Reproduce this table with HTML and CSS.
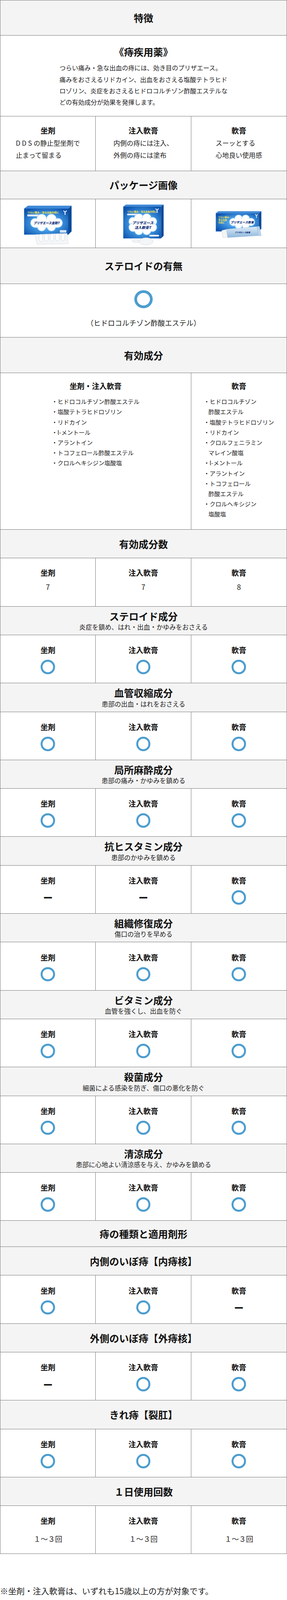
FILE: index.html
```html
<!DOCTYPE html>
<html lang="ja">
<head>
<meta charset="utf-8">
<title>プリザエース 比較表</title>
<link rel="stylesheet" href="styles.css">
</head>
<body>
<div class="tbl">
  <div class="hd hd-first"><h2 class="ttl">特徴</h2></div>

  <div class="row desc">
    <p class="desc-ttl">《痔疾用薬》</p>
    <p class="desc-txt">つらい痛み・急な出血の痔には、効き目のプリザエース。<br>痛みをおさえるリドカイン、出血をおさえる塩酸テトラヒド<br>ロゾリン、炎症をおさえるヒドロコルチゾン酢酸エステルな<br>どの有効成分が効果を発揮します。</p>
  </div>

  <div class="row cols3 feat">
    <div class="cell"><p class="lbl">坐剤</p><p class="ftxt"><span class="wide">DDS</span>の静止型坐剤で<br>止まって留まる</p></div>
    <div class="cell"><p class="lbl">注入軟膏</p><p class="ftxt">内側の痔には注入、<br>外側の痔には塗布</p></div>
    <div class="cell"><p class="lbl">軟膏</p><p class="ftxt">スーッとする<br>心地良い使用感</p></div>
  </div>

  <div class="hd hd-pkg"><h2 class="ttl">パッケージ画像</h2></div>

  <div class="row cols3 pkg">
    <div class="cell">
      <svg class="pk1" viewBox="0 0 150 124" aria-label="プリザエース坐剤T">
        <defs>
          <radialGradient id="ga" cx="50%" cy="55%" r="65%">
            <stop offset="0" stop-color="#d6efff"/>
            <stop offset="0.4" stop-color="#4aa3ea"/>
            <stop offset="1" stop-color="#0c52ad"/>
          </radialGradient>
        </defs>
        <polygon points="2,12 14,3 148,3 138,12" fill="#3c88d8"/>
        <rect x="2" y="12" width="136" height="80" fill="url(#ga)"/>
        <polygon points="138,12 148,3 148,82 138,92" fill="#0b4a98"/>
        <text x="12" y="26" font-size="7.5" font-weight="700" fill="#ffe94a">つらい痛み・急な出血の痔に</text>
        <rect x="12" y="30" width="40" height="6" fill="#ffffff" opacity="0.85"/>
        <g fill="#ffffff" stroke="#9fd0f4" stroke-width="1.5">
          <circle cx="36" cy="56" r="14"/><circle cx="56" cy="44" r="15"/><circle cx="86" cy="44" r="15"/>
          <circle cx="106" cy="56" r="14"/><circle cx="56" cy="68" r="13"/><circle cx="86" cy="68" r="13"/>
        </g>
        <rect x="36" y="44" width="70" height="26" fill="#ffffff"/>
        <text x="71" y="60" text-anchor="middle" font-size="10" font-weight="900" font-style="italic" fill="#0c2e78" textLength="80" lengthAdjust="spacingAndGlyphs">プリザエース坐剤T</text>
        <path d="M122,18 L128,26 L134,18 L131,18 L128,22 L125,18Z" fill="#ffffff"/>
        <rect x="126.5" y="26" width="3" height="5" fill="#ffffff"/>
        <rect x="112" y="78" width="20" height="8" fill="#ffffff" opacity="0.8"/>
        <polygon points="36,92 134,88 138,120 42,122" fill="#f4f6f8" stroke="#d6dbe0"/>
        <g fill="#ffffff" stroke="#c9d0d8">
          <rect x="48" y="91" width="11" height="22" rx="5.5"/><rect x="65" y="90" width="11" height="22" rx="5.5"/>
          <rect x="82" y="90" width="11" height="22" rx="5.5"/><rect x="99" y="89" width="11" height="22" rx="5.5"/>
          <rect x="116" y="89" width="11" height="22" rx="5.5"/>
        </g>
      </svg>
    </div>
    <div class="cell">
      <svg class="pk2" viewBox="0 0 128 128" aria-label="プリザエース注入軟膏T">
        <defs>
          <radialGradient id="gb" cx="50%" cy="55%" r="65%">
            <stop offset="0" stop-color="#d6efff"/>
            <stop offset="0.4" stop-color="#4aa3ea"/>
            <stop offset="1" stop-color="#0c52ad"/>
          </radialGradient>
        </defs>
        <polygon points="2,8 10,2 126,2 118,8" fill="#3c88d8"/>
        <rect x="2" y="8" width="116" height="98" fill="url(#gb)"/>
        <polygon points="118,8 126,2 126,98 118,106" fill="#0b4a98"/>
        <text x="14" y="26" font-size="7" font-weight="700" fill="#ffe94a">つらい痛み・急な出血の痔に</text>
        <rect x="14" y="30" width="36" height="5" fill="#ffffff" opacity="0.85"/>
        <g fill="#ffffff" stroke="#9fd0f4" stroke-width="1.5">
          <circle cx="32" cy="54" r="13"/><circle cx="50" cy="44" r="14"/><circle cx="74" cy="44" r="14"/>
          <circle cx="92" cy="54" r="13"/><circle cx="32" cy="72" r="13"/><circle cx="92" cy="72" r="13"/>
          <circle cx="50" cy="82" r="13"/><circle cx="74" cy="82" r="13"/>
        </g>
        <rect x="30" y="44" width="64" height="40" fill="#ffffff"/>
        <text x="62" y="62" text-anchor="middle" font-size="11" font-weight="900" font-style="italic" fill="#0c2e78">プリザエース</text>
        <text x="62" y="77" text-anchor="middle" font-size="11" font-weight="900" font-style="italic" fill="#0c2e78">注入軟膏T</text>
        <path d="M100,14 L106,22 L112,14 L109,14 L106,18 L103,14Z" fill="#ffffff"/>
        <rect x="104.5" y="22" width="3" height="5" fill="#ffffff"/>
        <rect x="82" y="95" width="30" height="5" rx="2.5" fill="#ffffff"/>
        <rect x="30" y="110" width="24" height="8" rx="4" fill="#f3f5f7" stroke="#d4d9de"/>
        <ellipse cx="72" cy="115" rx="22" ry="11" fill="#f3f5f7" stroke="#d4d9de"/>
      </svg>
    </div>
    <div class="cell">
      <svg class="pk3" viewBox="0 0 145 86" aria-label="プリザエース軟膏">
        <defs>
          <radialGradient id="gc" cx="55%" cy="50%" r="65%">
            <stop offset="0" stop-color="#d6efff"/>
            <stop offset="0.4" stop-color="#4aa3ea"/>
            <stop offset="1" stop-color="#0c52ad"/>
          </radialGradient>
          <linearGradient id="gt" x1="0" y1="0" x2="0" y2="1">
            <stop offset="0" stop-color="#dcebf7"/>
            <stop offset="1" stop-color="#8db6dc"/>
          </linearGradient>
        </defs>
        <polygon points="2,7 10,1 142,1 134,7" fill="#3c88d8"/>
        <rect x="2" y="7" width="132" height="56" fill="url(#gc)"/>
        <polygon points="134,7 142,1 142,55 134,63" fill="#0b4a98"/>
        <text x="10" y="22" font-size="6.5" font-weight="700" fill="#ffe94a">つらい痛み・</text>
        <text x="10" y="30" font-size="6.5" font-weight="700" fill="#ffe94a">急な出血</text>
        <text x="10" y="38" font-size="6.5" font-weight="700" fill="#ffe94a">の痔に</text>
        <g fill="#ffffff" stroke="#9fd0f4" stroke-width="1.5">
          <circle cx="56" cy="34" r="12"/><circle cx="72" cy="24" r="12"/><circle cx="94" cy="24" r="12"/>
          <circle cx="110" cy="34" r="12"/><circle cx="72" cy="44" r="11"/><circle cx="94" cy="44" r="11"/>
        </g>
        <rect x="56" y="24" width="54" height="20" fill="#ffffff"/>
        <text x="83" y="38" text-anchor="middle" font-size="9" font-weight="900" font-style="italic" fill="#0c2e78">プリザエース軟膏</text>
        <path d="M122,10 L127,17 L132,10 L129.5,10 L127,13.5 L124.5,10Z" fill="#ffffff"/>
        <rect x="125.7" y="17" width="2.6" height="4" fill="#ffffff"/>
        <polygon points="34,56 128,48 134,76 38,82" fill="url(#gt)" stroke="#9fbddb" stroke-width="0.6"/>
        <polygon points="128,48 136,47 142,76 134,77" fill="#b9d3ea" stroke="#9fbddb" stroke-width="0.6"/>
        <polygon points="20,60 34,57 38,80 24,82" fill="#f4f4f4" stroke="#cfcfcf" stroke-width="0.8"/>
        <text x="84" y="68" text-anchor="middle" font-size="6" font-weight="900" font-style="italic" fill="#0c2e78">プリザエース軟膏</text>
      </svg>
    </div>
  </div>

  <div class="hd hd-tall"><h2 class="ttl">ステロイドの有無</h2></div>
  <div class="row steroid">
    <span class="mark-o mark-lg" aria-label="あり"></span>
    <p class="steroid-txt">（ヒドロコルチゾン酢酸エステル）</p>
  </div>

  <div class="hd hd-tall"><h2 class="ttl">有効成分</h2></div>
  <div class="row cols2 ingr">
    <div class="cell">
      <p class="lbl">坐剤・注入軟膏</p>
      <ul class="ilist">
        <li>・ヒドロコルチゾン酢酸エステル</li>
        <li>・塩酸テトラヒドロゾリン</li>
        <li>・リドカイン</li>
        <li>・l-メントール</li>
        <li>・アラントイン</li>
        <li>・トコフェロール酢酸エステル</li>
        <li>・クロルヘキシジン塩酸塩</li>
      </ul>
    </div>
    <div class="cell">
      <p class="lbl">軟膏</p>
      <ul class="ilist">
        <li>・ヒドロコルチゾン<br>酢酸エステル</li>
        <li>・塩酸テトラヒドロゾリン</li>
        <li>・リドカイン</li>
        <li>・クロルフェニラミン<br>マレイン酸塩</li>
        <li>・l-メントール</li>
        <li>・アラントイン</li>
        <li>・トコフェロール<br>酢酸エステル</li>
        <li>・クロルヘキシジン<br>塩酸塩</li>
      </ul>
    </div>
  </div>

  <div class="hd"><h2 class="ttl">有効成分数</h2></div>
  <div class="row cols3 mk mk-num">
    <div class="cell"><p class="lbl">坐剤</p><p class="val val-num">7</p></div>
    <div class="cell"><p class="lbl">注入軟膏</p><p class="val val-num">7</p></div>
    <div class="cell"><p class="lbl">軟膏</p><p class="val val-num">8</p></div>
  </div>

  <div class="hd hd-sub"><h2 class="ttl">ステロイド成分</h2><p class="sub">炎症を鎮め、はれ・出血・かゆみをおさえる</p></div>
  <div class="row cols3 mk">
    <div class="cell"><p class="lbl">坐剤</p><span class="mark-o"></span></div>
    <div class="cell"><p class="lbl">注入軟膏</p><span class="mark-o"></span></div>
    <div class="cell"><p class="lbl">軟膏</p><span class="mark-o"></span></div>
  </div>

  <div class="hd hd-sub"><h2 class="ttl">血管収縮成分</h2><p class="sub">患部の出血・はれをおさえる</p></div>
  <div class="row cols3 mk">
    <div class="cell"><p class="lbl">坐剤</p><span class="mark-o"></span></div>
    <div class="cell"><p class="lbl">注入軟膏</p><span class="mark-o"></span></div>
    <div class="cell"><p class="lbl">軟膏</p><span class="mark-o"></span></div>
  </div>

  <div class="hd hd-sub"><h2 class="ttl">局所麻酔成分</h2><p class="sub">患部の痛み・かゆみを鎮める</p></div>
  <div class="row cols3 mk">
    <div class="cell"><p class="lbl">坐剤</p><span class="mark-o"></span></div>
    <div class="cell"><p class="lbl">注入軟膏</p><span class="mark-o"></span></div>
    <div class="cell"><p class="lbl">軟膏</p><span class="mark-o"></span></div>
  </div>

  <div class="hd hd-sub"><h2 class="ttl">抗ヒスタミン成分</h2><p class="sub">患部のかゆみを鎮める</p></div>
  <div class="row cols3 mk">
    <div class="cell"><p class="lbl">坐剤</p><span class="mark-x">ー</span></div>
    <div class="cell"><p class="lbl">注入軟膏</p><span class="mark-x">ー</span></div>
    <div class="cell"><p class="lbl">軟膏</p><span class="mark-o"></span></div>
  </div>

  <div class="hd hd-sub"><h2 class="ttl">組織修復成分</h2><p class="sub">傷口の治りを早める</p></div>
  <div class="row cols3 mk">
    <div class="cell"><p class="lbl">坐剤</p><span class="mark-o"></span></div>
    <div class="cell"><p class="lbl">注入軟膏</p><span class="mark-o"></span></div>
    <div class="cell"><p class="lbl">軟膏</p><span class="mark-o"></span></div>
  </div>

  <div class="hd hd-sub"><h2 class="ttl">ビタミン成分</h2><p class="sub">血管を強くし、出血を防ぐ</p></div>
  <div class="row cols3 mk">
    <div class="cell"><p class="lbl">坐剤</p><span class="mark-o"></span></div>
    <div class="cell"><p class="lbl">注入軟膏</p><span class="mark-o"></span></div>
    <div class="cell"><p class="lbl">軟膏</p><span class="mark-o"></span></div>
  </div>

  <div class="hd hd-sub"><h2 class="ttl">殺菌成分</h2><p class="sub">細菌による感染を防ぎ、傷口の悪化を防ぐ</p></div>
  <div class="row cols3 mk">
    <div class="cell"><p class="lbl">坐剤</p><span class="mark-o"></span></div>
    <div class="cell"><p class="lbl">注入軟膏</p><span class="mark-o"></span></div>
    <div class="cell"><p class="lbl">軟膏</p><span class="mark-o"></span></div>
  </div>

  <div class="hd hd-sub"><h2 class="ttl">清涼成分</h2><p class="sub">患部に心地よい清涼感を与え、かゆみを鎮める</p></div>
  <div class="row cols3 mk">
    <div class="cell"><p class="lbl">坐剤</p><span class="mark-o"></span></div>
    <div class="cell"><p class="lbl">注入軟膏</p><span class="mark-o"></span></div>
    <div class="cell"><p class="lbl">軟膏</p><span class="mark-o"></span></div>
  </div>

  <div class="hd hd-short"><h2 class="ttl">痔の種類と適用剤形</h2></div>

  <div class="hd"><h2 class="ttl">内側のいぼ痔【内痔核】</h2></div>
  <div class="row cols3 mk">
    <div class="cell"><p class="lbl">坐剤</p><span class="mark-o"></span></div>
    <div class="cell"><p class="lbl">注入軟膏</p><span class="mark-o"></span></div>
    <div class="cell"><p class="lbl">軟膏</p><span class="mark-x">ー</span></div>
  </div>

  <div class="hd"><h2 class="ttl">外側のいぼ痔【外痔核】</h2></div>
  <div class="row cols3 mk">
    <div class="cell"><p class="lbl">坐剤</p><span class="mark-x">ー</span></div>
    <div class="cell"><p class="lbl">注入軟膏</p><span class="mark-o"></span></div>
    <div class="cell"><p class="lbl">軟膏</p><span class="mark-o"></span></div>
  </div>

  <div class="hd"><h2 class="ttl">きれ痔【裂肛】</h2></div>
  <div class="row cols3 mk">
    <div class="cell"><p class="lbl">坐剤</p><span class="mark-o"></span></div>
    <div class="cell"><p class="lbl">注入軟膏</p><span class="mark-o"></span></div>
    <div class="cell"><p class="lbl">軟膏</p><span class="mark-o"></span></div>
  </div>

  <div class="hd"><h2 class="ttl">１日使用回数</h2></div>
  <div class="row cols3 mk">
    <div class="cell"><p class="lbl">坐剤</p><p class="val val-times">１～３回</p></div>
    <div class="cell"><p class="lbl">注入軟膏</p><p class="val val-times">１～３回</p></div>
    <div class="cell"><p class="lbl">軟膏</p><p class="val val-times">１～３回</p></div>
  </div>
</div>

<p class="note">※坐剤・注入軟膏は、いずれも15歳以上の方が対象です。</p>
</body>
</html>
```

FILE: styles.css
```css
* {
  box-sizing: border-box;
  margin: 0;
  padding: 0;
}

body {
  margin: 0;
  background: #ffffff;
  color: #222222;
  font-family: "Noto Sans CJK JP", "Noto Sans", sans-serif;
}

.tbl {
  width: 100%;
  border: 1.7px solid #777777;
  border-bottom: none;
}

/* section headers */
.hd {
  height: 73.3px;
  background: #f4f4f4;
  border-bottom: 1.7px solid #777777;
  display: flex;
  flex-direction: column;
  align-items: center;
  justify-content: center;
}

.hd-first { height: 90px; }
.hd-tall { height: 91.7px; }
.hd-pkg { height: 72.5px; }
.hd-short { height: 66.7px; }

.hd-sub {
  justify-content: flex-start;
  padding-top: 10px;
}

.ttl {
  font-size: 25px;
  font-weight: 700;
  line-height: 28.3px;
  color: #111111;
}

.sub {
  font-size: 16.5px;
  line-height: 28.3px;
  color: #222222;
}

/* rows */
.row {
  border-bottom: 1.7px solid #777777;
}

.cols3 {
  display: grid;
  grid-template-columns: 1fr 1fr 1fr;
}

.cols2 {
  display: grid;
  grid-template-columns: 2fr 1fr;
}

.cell {
  min-width: 0;
  border-right: 1.7px solid #777777;
  display: flex;
  flex-direction: column;
  align-items: center;
}

.cell:last-child {
  border-right: none;
}

.lbl {
  font-size: 19px;
  font-weight: 700;
  line-height: 20px;
  color: #111111;
}

/* description */
.desc {
  height: 206.7px;
  padding-top: 25px;
  display: flex;
  flex-direction: column;
  align-items: center;
}

.desc-ttl {
  font-size: 25px;
  font-weight: 700;
  line-height: 33.3px;
  color: #111111;
}

.desc-txt {
  margin-top: 10px;
  font-size: 16px;
  line-height: 29.2px;
  white-space: nowrap;
}

/* feature row */
.feat {
  height: 140px;
}

.feat .cell {
  padding-top: 23.3px;
}

.feat .lbl {
  line-height: 25px;
}

.ftxt {
  margin-top: 5px;
  font-size: 17px;
  line-height: 30.8px;
  white-space: nowrap;
}

.wide {
  letter-spacing: 4px;
}

/* packages */
.pkg {
  height: 125px;
}

.pkg .cell {
  justify-content: center;
  padding-top: 6.7px;
}

.pkg svg {
  display: block;
}

.pk1 { width: 125px; height: 103.3px; }
.pk2 { width: 106.7px; height: 106.7px; }
.pk3 { width: 120.8px; height: 71.7px; }

/* steroid */
.steroid {
  height: 136.7px;
  padding-top: 15.8px;
  display: flex;
  flex-direction: column;
  align-items: center;
}

.steroid-txt {
  margin-top: 25px;
  font-size: 18.3px;
  line-height: 25px;
}

/* ingredients */
.ingr {
  height: 400.8px;
}

.ingr .cell {
  padding-top: 20px;
}

.ingr .lbl {
  line-height: 25px;
}

.ilist {
  list-style: none;
  margin-top: 15px;
  font-size: 15px;
  line-height: 26.2px;
  white-space: nowrap;
}

.ilist li {
  padding-left: 0.8em;
  text-indent: -0.8em;
}

/* mark rows */
.mk {
  height: 123.3px;
}

.mk .cell {
  padding-top: 28.3px;
}

.mk-num .cell {
  padding-top: 26.7px;
}

.mark-o {
  display: block;
  width: 36.7px;
  height: 36.7px;
  margin-top: 15px;
  border: 5.8px solid #4c9dcf;
  border-radius: 50%;
}

.mark-lg {
  width: 46.7px;
  height: 46.7px;
  margin-top: 0;
  border-width: 7.5px;
}

.mark-x {
  display: flex;
  align-items: center;
  justify-content: center;
  height: 36.7px;
  margin-top: 15px;
  font-size: 25px;
  font-weight: 700;
  color: #111111;
}

.val {
  font-size: 18.3px;
  line-height: 25px;
}

.val-num {
  margin-top: 14.2px;
}

.val-times {
  margin-top: 23.3px;
}

/* footnote */
.note {
  margin-top: 78.3px;
  font-size: 21px;
  line-height: 30px;
  color: #222222;
  white-space: nowrap;
}
```
